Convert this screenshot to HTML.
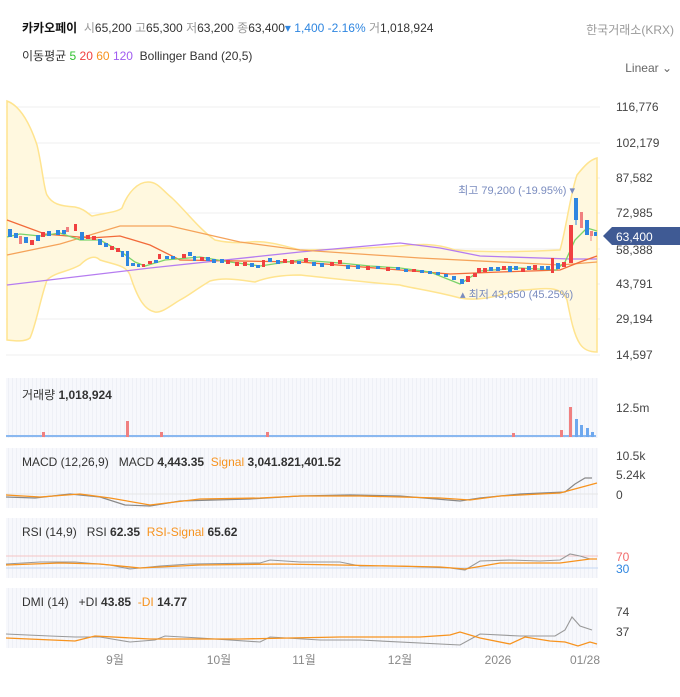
<!DOCTYPE html>
<html><head><meta charset="utf-8"><style>
body{margin:0;width:680px;height:697px;background:#fff;font-family:"Liberation Sans","Noto Sans CJK KR",sans-serif;overflow:hidden;position:relative}
.t{position:absolute;white-space:nowrap;font-size:12px;color:#333}
svg{position:absolute;left:0;top:0}
</style></head><body>
<svg width="680" height="697" viewBox="0 0 680 697">
<defs>
<pattern id="st" width="4" height="10" patternUnits="userSpaceOnUse"><rect width="4" height="10" fill="#f7f8fc"/><rect width="1" height="10" fill="#eef0f6"/></pattern>
</defs>
<!-- grid -->
<g stroke="#efefef" stroke-width="1">
<line x1="6" y1="107" x2="600" y2="107"/><line x1="6" y1="143" x2="600" y2="143"/><line x1="6" y1="178" x2="600" y2="178"/><line x1="6" y1="213" x2="600" y2="213"/><line x1="6" y1="249" x2="600" y2="249"/><line x1="6" y1="284" x2="600" y2="284"/><line x1="6" y1="319" x2="600" y2="319"/><line x1="6" y1="355" x2="600" y2="355"/>
</g>
<!-- bollinger -->
<path d="M7,101 C18,105 28,118 37,145 C42,165 44,190 47,195 C52,204 60,206 75,207 C85,209 88,214 92,216 C105,213 118,212 122,208 C128,192 138,182 148,182 C158,182 162,190 172,198 C185,210 200,230 215,240 C228,243 240,243 250,242 C265,240 285,246 300,250 C330,250 370,248 400,246 C420,244 435,243 455,250 C480,252 520,252 560,250 C566,230 570,195 577,175 C585,165 590,160 597,158 L597,352 C590,352 584,350 580,344 C574,335 571,320 567,300 C560,283 540,290 520,290 C500,295 480,302 460,298 C430,290 410,288 400,285 C360,282 320,277 300,275 C280,275 265,278 255,282 C240,280 225,277 210,281 C195,290 188,296 180,300 C170,306 162,313 155,312 C145,310 138,300 130,275 C126,265 115,265 100,260 C95,255 88,257 80,265 C68,272 55,272 47,280 C40,300 36,325 30,338 C25,342 15,341 7,340 Z" fill="#fff8df" stroke="#ffe48f" stroke-width="1.5"/>
<!-- MAs -->
<polyline fill="none" stroke="#b57cf0" stroke-width="1.3" points="7,285 150,268 300,252 400,243 440,248 480,256 570,259 597,259"/>
<polyline fill="none" stroke="#f5a35a" stroke-width="1.3" points="7,255 60,244 120,226 170,226 240,242 300,250 420,258 560,265 597,262"/>
<polyline fill="none" stroke="#f26a3a" stroke-width="1.3" points="7,220 45,234 90,238 120,236 150,245 180,260 240,261 300,262 400,270 450,274 500,272 560,270 580,262 597,256"/>
<polyline fill="none" stroke="#7bd36a" stroke-width="1.3" points="7,237 20,234 40,236 60,233 80,240 100,240 120,251 135,262 145,266 165,260 200,257 230,262 260,266 300,260 340,263 370,266 400,268 430,272 460,284 480,271 520,268 556,270 565,262 575,240 587,228 597,231"/>
<!-- candles -->
<g stroke-width="1">
<rect x="8" y="229" width="4" height="8" fill="#2f86e0"/><rect x="14" y="233" width="4" height="5" fill="#2f86e0"/><rect x="19" y="236" width="3" height="8" fill="#f08080"/><rect x="24" y="237" width="4" height="6" fill="#2f86e0"/><rect x="30" y="240" width="4" height="5" fill="#f04040"/><rect x="36" y="235" width="4" height="6" fill="#2f86e0"/><rect x="41" y="232" width="4" height="5" fill="#f04040"/><rect x="47" y="231" width="4" height="5" fill="#2f86e0"/><rect x="56" y="230" width="4" height="5" fill="#2f86e0"/><rect x="62" y="230" width="4" height="4" fill="#2f86e0"/><rect x="66" y="227" width="3" height="5" fill="#f08080"/><rect x="74" y="224" width="3" height="7" fill="#f04040"/><rect x="80" y="232" width="4" height="8" fill="#2f86e0"/><rect x="86" y="235" width="4" height="4" fill="#f04040"/><rect x="92" y="236" width="4" height="4" fill="#f04040"/><rect x="98" y="239" width="4" height="6" fill="#2f86e0"/><rect x="104" y="243" width="4" height="4" fill="#2f86e0"/><rect x="110" y="246" width="4" height="4" fill="#f04040"/><rect x="116" y="248" width="4" height="4" fill="#f04040"/><rect x="121" y="251" width="3" height="6" fill="#2f86e0"/><rect x="126" y="251" width="3" height="15" fill="#2f86e0"/><rect x="131" y="263" width="4" height="3" fill="#2f86e0"/><rect x="137" y="264" width="3" height="3" fill="#2f86e0"/><rect x="142" y="264" width="3" height="3" fill="#f04040"/><rect x="148" y="261" width="4" height="3" fill="#f04040"/><rect x="154" y="260" width="4" height="3" fill="#2f86e0"/><rect x="158" y="254" width="3" height="5" fill="#f04040"/><rect x="165" y="256" width="4" height="3" fill="#2f86e0"/>
<rect x="171" y="256" width="4" height="3" fill="#2f86e0"/><rect x="182" y="254" width="4" height="4" fill="#f04040"/><rect x="188" y="252" width="4" height="4" fill="#2f86e0"/><rect x="193" y="256" width="3" height="5" fill="#2f86e0"/><rect x="200" y="257" width="4" height="4" fill="#f04040"/><rect x="206" y="257" width="4" height="4" fill="#2f86e0"/><rect x="212" y="259" width="4" height="4" fill="#2f86e0"/><rect x="220" y="259" width="4" height="4" fill="#2f86e0"/><rect x="226" y="260" width="4" height="4" fill="#f04040"/><rect x="235" y="262" width="4" height="4" fill="#f04040"/><rect x="243" y="262" width="4" height="4" fill="#f04040"/><rect x="250" y="263" width="4" height="4" fill="#2f86e0"/><rect x="256" y="265" width="4" height="3" fill="#2f86e0"/><rect x="262" y="260" width="3" height="7" fill="#f04040"/><rect x="268" y="258" width="4" height="4" fill="#2f86e0"/><rect x="276" y="260" width="4" height="4" fill="#2f86e0"/><rect x="283" y="259" width="4" height="4" fill="#f04040"/><rect x="290" y="260" width="4" height="4" fill="#f04040"/><rect x="297" y="261" width="4" height="3" fill="#2f86e0"/><rect x="304" y="258" width="4" height="4" fill="#f04040"/><rect x="312" y="262" width="4" height="4" fill="#2f86e0"/><rect x="320" y="263" width="4" height="4" fill="#2f86e0"/><rect x="330" y="262" width="4" height="4" fill="#f04040"/><rect x="338" y="260" width="4" height="4" fill="#f04040"/><rect x="346" y="265" width="4" height="4" fill="#2f86e0"/><rect x="356" y="265" width="4" height="4" fill="#2f86e0"/><rect x="366" y="266" width="4" height="4" fill="#f04040"/><rect x="376" y="266" width="4" height="3" fill="#2f86e0"/><rect x="386" y="267" width="4" height="4" fill="#f04040"/><rect x="396" y="267" width="4" height="3" fill="#2f86e0"/>
<rect x="404" y="269" width="4" height="3" fill="#2f86e0"/><rect x="412" y="269" width="4" height="3" fill="#f04040"/><rect x="420" y="270" width="4" height="3" fill="#2f86e0"/><rect x="428" y="271" width="4" height="3" fill="#2f86e0"/><rect x="436" y="272" width="4" height="3" fill="#2f86e0"/><rect x="444" y="274" width="4" height="3" fill="#2f86e0"/><rect x="452" y="276" width="4" height="4" fill="#2f86e0"/><rect x="460" y="279" width="4" height="5" fill="#2f86e0"/><rect x="466" y="276" width="4" height="6" fill="#f04040"/><rect x="473" y="273" width="4" height="4" fill="#f04040"/><rect x="477" y="268" width="4" height="5" fill="#f04040"/><rect x="483" y="268" width="4" height="4" fill="#f04040"/><rect x="489" y="267" width="4" height="4" fill="#2f86e0"/><rect x="496" y="267" width="4" height="4" fill="#2f86e0"/><rect x="502" y="266" width="4" height="4" fill="#f04040"/><rect x="508" y="266" width="4" height="6" fill="#2f86e0"/><rect x="514" y="266" width="4" height="4" fill="#2f86e0"/><rect x="521" y="268" width="4" height="4" fill="#f04040"/><rect x="527" y="266" width="4" height="4" fill="#2f86e0"/><rect x="533" y="265" width="4" height="5" fill="#f04040"/><rect x="540" y="266" width="4" height="4" fill="#2f86e0"/><rect x="546" y="266" width="4" height="4" fill="#2f86e0"/><rect x="551" y="258" width="3" height="15" fill="#f04040"/><rect x="556" y="263" width="4" height="6" fill="#2f86e0"/><rect x="562" y="262" width="4" height="5" fill="#f04040"/><rect x="569" y="225" width="4" height="38" fill="#f04040"/><rect x="574" y="198" width="4" height="22" fill="#2f86e0"/><line x1="576" y1="198" x2="576" y2="225" stroke="#2f86e0"/><rect x="580" y="212" width="3" height="16" fill="#f08080"/><rect x="585" y="220" width="4" height="15" fill="#2f86e0"/><rect x="590" y="231" width="3" height="5" fill="#f08080"/><line x1="591" y1="231" x2="591" y2="241" stroke="#f08080"/><rect x="594" y="232" width="3" height="4" fill="#2f86e0"/>
</g>
<text x="575" y="194" font-size="11" fill="#7a8cbf" text-anchor="end" font-family="Liberation Sans,Noto Sans CJK KR,sans-serif">최고 79,200 (-19.95%) ▾</text>
<text x="460" y="298" font-size="11" fill="#7a8cbf" font-family="Liberation Sans,Noto Sans CJK KR,sans-serif">▴ 최저 43,650 (45.25%)</text>
<!-- current price tag -->
<path d="M603,236 L612,227 L680,227 L680,245 L612,245 Z" fill="#3f5a94"/>
<text x="616" y="241" font-size="12" fill="#fff" font-family="Liberation Sans,sans-serif">63,400</text>
<g font-size="12" fill="#444" font-family="Liberation Sans,sans-serif">
<text x="616" y="111">116,776</text><text x="616" y="147">102,179</text><text x="616" y="182">87,582</text><text x="616" y="217">72,985</text><text x="616" y="254">58,388</text><text x="616" y="288">43,791</text><text x="616" y="323">29,194</text><text x="616" y="359">14,597</text>
</g>
<!-- panels -->
<rect x="6" y="378" width="592" height="60" fill="url(#st)"/>
<rect x="6" y="448" width="592" height="60" fill="url(#st)"/>
<rect x="6" y="518" width="592" height="60" fill="url(#st)"/>
<rect x="6" y="588" width="592" height="60" fill="url(#st)"/>
<!-- volume -->
<g fill="#8ab8f0">
<rect x="6" y="435" width="590" height="2"/>
</g>
<g fill="#f08080">
<rect x="126" y="421" width="3" height="16"/><rect x="42" y="432" width="3" height="5"/><rect x="160" y="432" width="3" height="5"/><rect x="266" y="432" width="3" height="5"/><rect x="512" y="433" width="3" height="4"/><rect x="560" y="430" width="3" height="7"/><rect x="569" y="407" width="3" height="30"/>
</g>
<g fill="#6ea8ee"><rect x="575" y="419" width="3" height="18"/><rect x="580" y="425" width="3" height="12"/><rect x="586" y="428" width="3" height="9"/><rect x="591" y="432" width="3" height="5"/></g>
<!-- MACD -->
<line x1="6" y1="494" x2="598" y2="494" stroke="#e6e6e6"/>
<polyline fill="none" stroke="#888" stroke-width="1.2" points="6,497 35,498 70,494 100,497 125,505 150,506 180,501 250,499 300,496 350,495 400,496 460,501 480,498 520,494 565,492 575,484 585,478 592,478"/>
<polyline fill="none" stroke="#f7931e" stroke-width="1.3" points="6,495 40,497 80,494 110,498 150,505 200,499 260,498 300,496 360,496 440,498 470,500 500,496 560,493 597,483"/>
<!-- RSI -->
<line x1="6" y1="556" x2="598" y2="556" stroke="#f4c4c4"/>
<line x1="6" y1="568" x2="598" y2="568" stroke="#c4d8f4"/>
<polyline fill="none" stroke="#999" stroke-width="1.1" points="6,564 40,562 75,562 110,565 130,569 160,566 190,564 260,563 270,560 300,562 340,562 360,566 400,566 450,568 465,570 480,561 510,560 540,561 560,560 570,554 580,556 590,559"/>
<polyline fill="none" stroke="#f7931e" stroke-width="1.3" points="6,565 60,563 100,564 140,568 200,565 280,564 340,565 440,567 465,569 500,563 560,563 590,559 597,559"/>
<!-- DMI -->
<polyline fill="none" stroke="#999" stroke-width="1.1" points="6,634 50,636 75,637 100,637 130,642 155,640 165,636 200,638 260,642 270,637 320,640 360,640 460,645 480,634 520,636 555,636 565,630 572,617 580,626 592,630"/>
<polyline fill="none" stroke="#f7931e" stroke-width="1.3" points="6,638 75,641 95,636 150,639 240,639 290,638 340,637 420,637 450,635 460,632 480,638 510,644 525,637 550,641 565,642 578,646 590,642 597,644</polyline>"/>
<g font-size="12" fill="#444" font-family="Liberation Sans,sans-serif">
<text x="616" y="412">12.5m</text><text x="616" y="460">10.5k</text><text x="616" y="479">5.24k</text><text x="616" y="499">0</text>
<text x="616" y="561" fill="#f26a6a">70</text><text x="616" y="573" fill="#2f86e0">30</text>
<text x="616" y="616">74</text><text x="616" y="636">37</text>
</g>
<g font-size="12" fill="#888" font-family="Liberation Sans,Noto Sans CJK KR,sans-serif" text-anchor="middle">
<text x="115" y="664">9월</text><text x="219" y="664">10월</text><text x="304" y="664">11월</text><text x="400" y="664">12월</text><text x="498" y="664">2026</text><text x="585" y="664">01/28</text>
</g>
</svg>
<div class="t" style="left:22px;top:19px"><b style="color:#111">카카오페이</b> <span style="color:#999">&nbsp;시</span>65,200 <span style="color:#999">고</span>65,300 <span style="color:#999">저</span>63,200 <span style="color:#999">종</span>63,400<span style="color:#2f86e0">▾ 1,400 -2.16%</span> <span style="color:#999">거</span>1,018,924</div>
<div class="t" style="right:6px;top:21px;color:#999">한국거래소(KRX)</div>
<div class="t" style="left:22px;top:47px">이동평균 <span style="color:#2ec02e">5</span> <span style="color:#f04040">20</span> <span style="color:#f7931e">60</span> <span style="color:#a05cf0">120</span> &nbsp;Bollinger Band (20,5)</div>
<div class="t" style="right:8px;top:61px;color:#666">Linear ⌄</div>
<div class="t" style="left:22px;top:386px">거래량 <b>1,018,924</b></div>
<div class="t" style="left:22px;top:455px">MACD (12,26,9) &nbsp; MACD <b>4,443.35</b> &nbsp;<span style="color:#f7931e">Signal</span> <b>3,041.821,401.52</b></div>
<div class="t" style="left:22px;top:525px">RSI (14,9) &nbsp; RSI <b>62.35</b> &nbsp;<span style="color:#f7931e">RSI-Signal</span> <b>65.62</b></div>
<div class="t" style="left:22px;top:595px">DMI (14) &nbsp; +DI <b>43.85</b> &nbsp;<span style="color:#f7931e">-DI</span> <b>14.77</b></div>
</body></html>
